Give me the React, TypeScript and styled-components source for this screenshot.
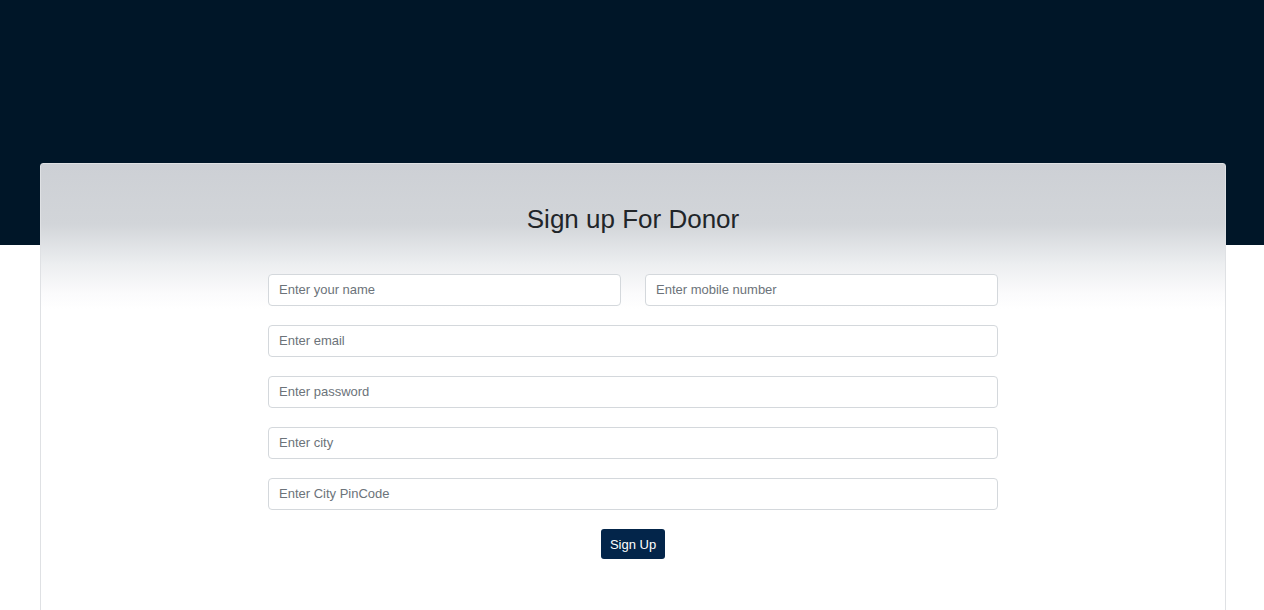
import React from "react";
import styled, { createGlobalStyle } from "styled-components";

const Global = createGlobalStyle`
  html, body { margin: 0; padding: 0; background: #ffffff; }
  body { font-family: "Liberation Sans", Arial, sans-serif; color: #212529; }
  * { box-sizing: border-box; }
`;

const Page = styled.div`
  width: 100%;
  min-height: 610px;
  overflow: hidden;
`;

const Hero = styled.div`
  height: 245px;
  background: #001628;
`;

const Card = styled.div`
  margin: -82px 38px 0 40px;
  min-height: 460px;
  border: 1px solid #dfe1e4;
  border-radius: 3px;
  background: linear-gradient(to bottom, #cdd0d5 0px, #d2d5d9 60px, #eceef0 100px, #fbfbfc 130px, #ffffff 145px);
  padding: 40px 0 40px;
  display: flex;
  flex-direction: column;
  align-items: center;
`;

const Title = styled.h2`
  margin: 0 0 39px;
  font-size: 26px;
  line-height: 31px;
  font-weight: 400;
  color: #212529;
`;

const Form = styled.form`
  width: 730px;
  display: flex;
  flex-direction: column;
  gap: 19px;
  align-items: stretch;
`;

const Row = styled.div`
  display: grid;
  grid-template-columns: 1fr 1fr;
  gap: 24px;
`;

const Input = styled.input`
  width: 100%;
  height: 32px;
  border: 1px solid #d4d8dc;
  border-radius: 4px;
  background: #ffffff;
  padding: 0 10px 1px;
  font-family: "Liberation Sans", Arial, sans-serif;
  font-size: 13px;
  color: #495057;
  outline: none;
  &::placeholder { color: #6c737a; }
`;

const Actions = styled.div`
  display: flex;
  justify-content: center;
`;

const Button = styled.button`
  height: 30px;
  padding: 0 9px;
  border: none;
  border-radius: 3px;
  background: #03254a;
  color: #ffffff;
  font-family: "Liberation Sans", Arial, sans-serif;
  font-size: 13px;
  cursor: pointer;
`;

export default function App() {
  return (
    <Page>
      <Global />
      <Hero />
      <Card>
        <Title>Sign up For Donor</Title>
        <Form onSubmit={(e) => e.preventDefault()}>
          <Row>
            <Input type="text" placeholder="Enter your name" />
            <Input type="text" placeholder="Enter mobile number" />
          </Row>
          <Input type="email" placeholder="Enter email" />
          <Input type="password" placeholder="Enter password" />
          <Input type="text" placeholder="Enter city" />
          <Input type="text" placeholder="Enter City PinCode" />
          <Actions>
            <Button type="submit">Sign Up</Button>
          </Actions>
        </Form>
      </Card>
    </Page>
  );
}
